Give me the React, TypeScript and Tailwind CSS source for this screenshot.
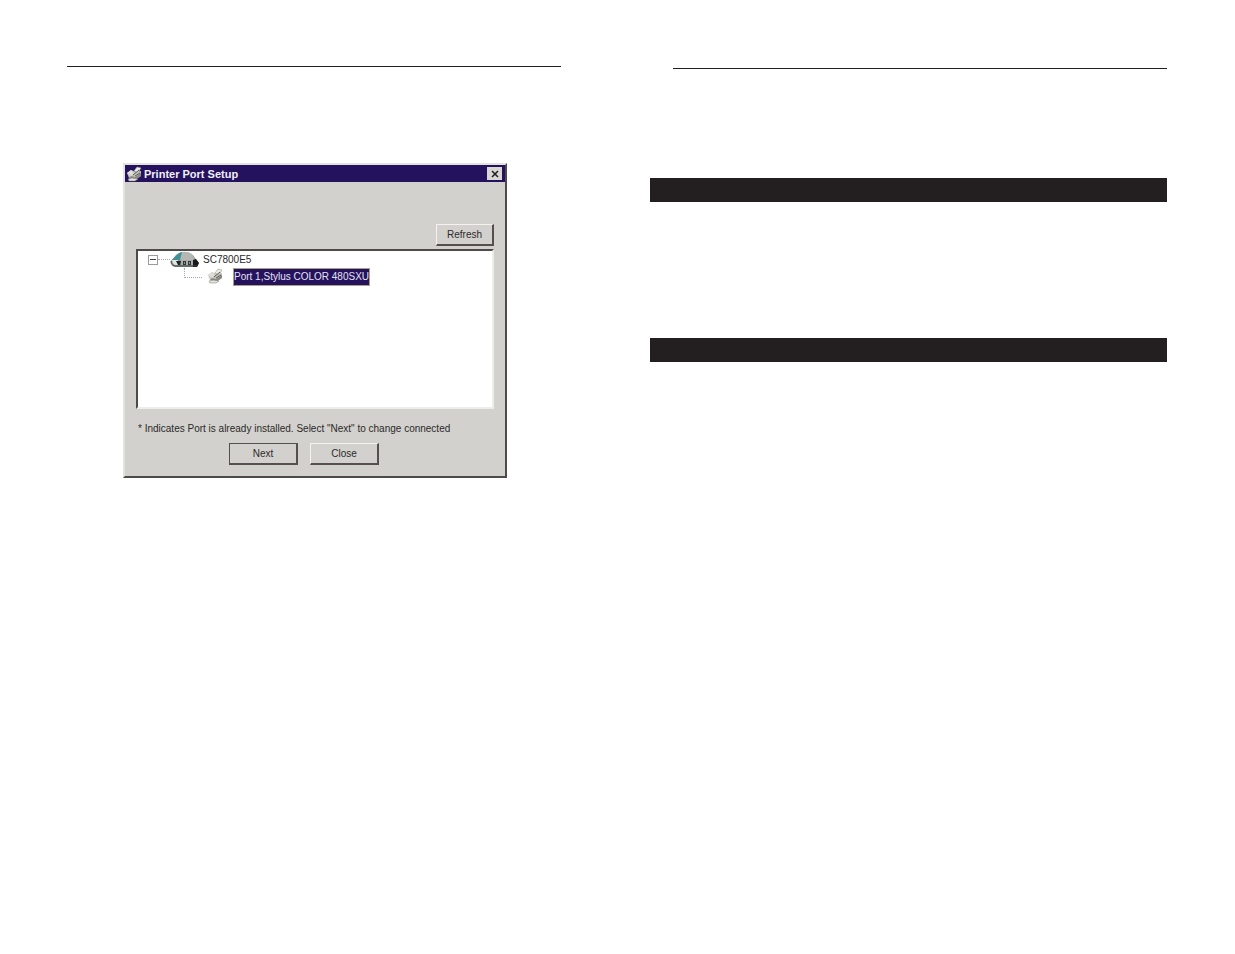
import type { ReactNode } from "react";

type DialogButtonProps = {
  children: ReactNode;
  className?: string;
  primary?: boolean;
};

function DialogButton({ children, className = "w-[69px]", primary }: DialogButtonProps) {
  return (
    <button
      type="button"
      className={`flex h-[22px] items-center justify-center border-t border-l border-r-2 border-b-2 border-r-[#55504f] border-b-[#55504f] bg-[#d3d1cd] text-[10px] leading-4 ${
        primary ? "border-t-[#55504f] border-l-[#55504f]" : "border-t-[#f4f2ee] border-l-[#f4f2ee]"
      } ${className}`}
    >
      {children}
    </button>
  );
}

function PrinterIcon({ className }: { className?: string }) {
  return (
    <svg viewBox="0 0 16 16" className={className} aria-hidden="true">
      <path d="M1 7l4-3 5 2 5-1v5l-6 4-6-2z" fill="#c4c3bc" />
      <path d="M8 5l3-4 4 1-3 5z" fill="#eeede7" stroke="#9a9992" strokeWidth=".6" />
      <path d="M1 7l4-3 3 3-3 3z" fill="#dfded8" />
      <path d="M5 10l4 1 6-4v3l-6 4-6-2z" fill="#8a8982" />
      <path d="M2 13l4-1 6 1-3 2H3z" fill="#e4e3dd" stroke="#77766f" strokeWidth=".5" />
      <path d="M7 9l6-5M9 10l5-3" stroke="#5c5b57" strokeWidth="1" />
    </svg>
  );
}

function PrintServerIcon({ className }: { className?: string }) {
  return (
    <svg viewBox="0 0 30 17" className={className} aria-hidden="true">
      <path d="M1 10L6 4q3-3 8-3 8 0 11 6l4 5-2 4H5q-4-2-4-6z" fill="#8c908d" />
      <path d="M1 10l6-6q3-3 6-3l-3 8H4z" fill="#3c9294" />
      <path d="M12 1q8-1 11 4l2 4H10z" fill="#b5b7b2" />
      <path d="M2 9h6v5H5q-3-2-3-5z" fill="#e3e5e1" />
      <path d="M6 10h5l-1 4H8z" fill="#1d2527" />
      <path d="M11 9h13v5H11z" fill="#a9ada9" />
      <path d="M13 10h3v4h-3zM18 10h3v4h-3z" fill="#30383a" />
      <path d="M14 11h1v2h-1zM19 11h1v2h-1z" fill="#8c908d" />
      <path d="M23 9l3-1 3 4-2 4h-4z" fill="#17191d" />
      <path d="M1 10q0 5 4 5h22" fill="none" stroke="#3f4745" />
    </svg>
  );
}

function PortTree() {
  return (
    <ul className="h-[160px] border-t-2 border-r-2 border-b-2 border-l-2 border-t-[#4d4a49] border-r-[#efede9] border-b-[#efede9] border-l-[#4d4a49] bg-white text-[10px] leading-4">
      <li>
        <div className="flex h-[17px] items-center pl-[10px]">
          <button
            type="button"
            aria-label="Collapse SC7800E5"
            className="flex size-[10px] items-center justify-center border border-[#9c9a9a]"
          >
            <span className="h-px w-[6px] bg-[#444243]" />
          </button>
          <span className="w-3 border-t border-dotted border-[#aaa8a8]" />
          <PrintServerIcon className="h-[17px] w-[30px]" />
          <span className="pl-[3px] text-[#2b292a]">SC7800E5</span>
        </div>
        <ul>
          <li className="flex h-[18px] pl-[46px]">
            <span className="h-[10px] w-[18px] border-b border-l border-dotted border-[#aaa8a8]" />
            <PrinterIcon className="ml-[5px] size-4" />
            <span className="ml-[10px] h-[18px] border border-[#a9a383] bg-[#24125e] text-[#e6e2f2]">
              Port 1,Stylus COLOR 480SXU
            </span>
          </li>
        </ul>
      </li>
    </ul>
  );
}

function PrinterPortDialog() {
  return (
    <section
      aria-label="Printer Port Setup"
      className="mt-24 ml-14 w-96 border-t-2 border-r-2 border-b-2 border-l-2 border-t-[#e4e2de] border-r-[#4d4a49] border-b-[#4d4a49] border-l-[#e4e2de] bg-[#d3d1cd] text-[#2b292a]"
    >
      <header className="flex h-[17px] items-center bg-[#24125e] pr-[3px] pl-px">
        <PrinterIcon className="size-4" />
        <h1 className="flex-1 pl-[2px] text-[11px] leading-4 font-bold text-[#f1eff8]">Printer Port Setup</h1>
        <button type="button" aria-label="Close window" className="flex h-[13px] w-[15px] items-center justify-center bg-[#d9d7d3]">
          <svg viewBox="0 0 8 8" className="size-2" aria-hidden="true">
            <path d="M1 1l6 6M7 1L1 7" stroke="#242022" strokeWidth="1.6" />
          </svg>
        </button>
      </header>
      <div className="px-[11px] pt-[42px] pb-[11px]">
        <div className="mb-[3px] flex justify-end">
          <DialogButton className="w-[58px]">Refresh</DialogButton>
        </div>
        <PortTree />
        <p className="mt-3 pl-[2px] text-[10px] leading-4 whitespace-nowrap">
          * Indicates Port is already installed. Select "Next" to change connected
        </p>
        <div className="mt-[6px] flex justify-center gap-3 pr-[22px]">
          <DialogButton primary>Next</DialogButton>
          <DialogButton>Close</DialogButton>
        </div>
      </div>
    </section>
  );
}

export default function App() {
  return (
    <main className="grid min-h-screen grid-cols-[494fr_517fr] gap-[89px] bg-white pr-[68px] pl-[67px] font-['Liberation_Sans',Arial,sans-serif]">
      <div className="pt-[66px]">
        <hr className="border-[#231f20]" />
        <PrinterPortDialog />
      </div>
      <div className="pt-[68px]">
        <hr className="ml-[23px] border-[#231f20]" />
        <div className="mt-[109px] h-6 bg-[#231f20]" />
        <div className="mt-[136px] h-6 bg-[#231f20]" />
      </div>
    </main>
  );
}
